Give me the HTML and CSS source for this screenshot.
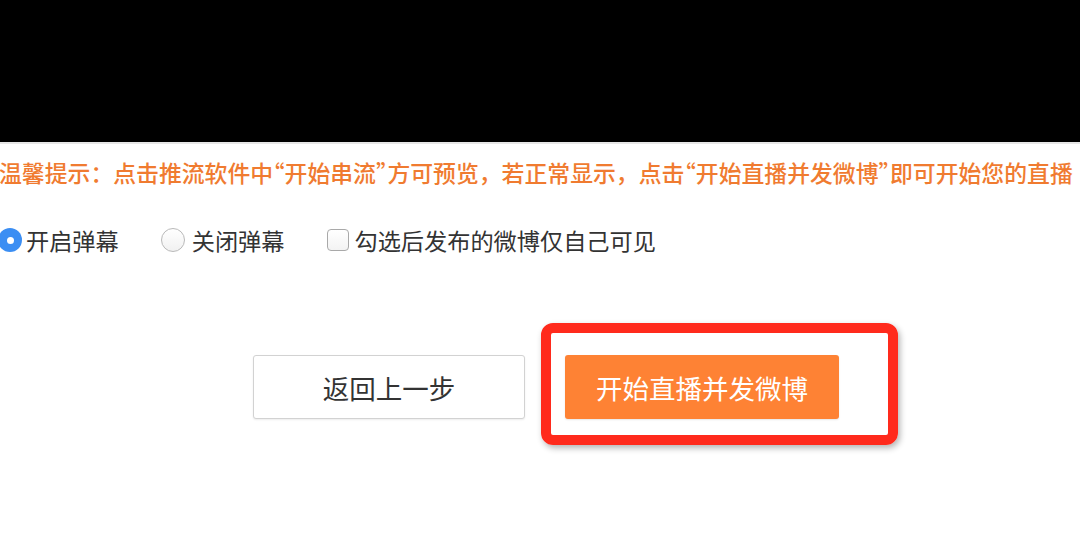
FILE: index.html
```html
<!DOCTYPE html>
<html lang="zh-CN">
<head>
<meta charset="utf-8">
<link rel="stylesheet" href="styles.css">
</head>
<body>
<div class="preview"></div>
<p class="tip">温馨提示：点击推流软件中<span class="q">“</span>开始串流<span class="q">”</span>方可预览，若正常显示，点击<span class="q">“</span>开始直播并发微博<span class="q">”</span>即可开始您的直播</p>
<div class="options">
  <label class="opt"><span class="radio checked"></span><span>开启弹幕</span></label>
  <label class="opt"><span class="radio"></span><span>关闭弹幕</span></label>
  <label class="opt"><span class="check"></span><span>勾选后发布的微博仅自己可见</span></label>
</div>
<div class="actions">
  <button class="btn back">返回上一步</button>
  <div class="primary-wrap">
    <button class="btn primary">开始直播并发微博</button>
    <span class="mark"></span>
  </div>
</div>
</body>
</html>
```
FILE: styles.css
```css
* { box-sizing: border-box; }
html, body {
  margin: 0;
  padding: 0;
  background: #fff;
  width: 1080px;
  height: 555px;
  overflow: hidden;
  font-family: "Noto Sans CJK SC", "Noto Sans", sans-serif;
}
.preview {
  height: 144px;
  background: #000;
  border-bottom: 2px solid #e6e6e6;
}
.tip {
  margin: 13px 0 0 -1px;
  font-size: 22.85px;
  line-height: 30px;
  color: #f07b30;
  font-weight: 500;
  white-space: nowrap;
}
.q {
  font-feature-settings: "halt" 1;
}
.options {
  display: flex;
  align-items: center;
  gap: 42px;
  margin: 38px 0 0 -2px;
  height: 30px;
  font-size: 23.2px;
  color: #333;
}
.opt {
  display: flex;
  align-items: center;
  gap: 7px;
}
.radio {
  width: 24px;
  height: 24px;
  border-radius: 50%;
  border: 1px solid #b9b9b9;
  background: linear-gradient(#fff, #f1f1f1);
  display: flex;
  align-items: center;
  justify-content: center;
}
.radio.checked {
  border: none;
  background: #3b8ef3;
  margin-right: -3px;
}
.radio.checked::after {
  content: "";
  width: 7px;
  height: 7px;
  border-radius: 50%;
  background: #fff;
}
.check {
  width: 22px;
  height: 22px;
  border: 1px solid #a9a9a9;
  border-radius: 4px;
  background: linear-gradient(#fff, #f3f3f3);
  margin-right: -1px;
}
.actions {
  display: flex;
  gap: 40px;
  margin-top: 100px;
  padding-left: 253px;
  align-items: flex-start;
}
.btn {
  font-family: inherit;
  font-size: 26.5px;
  border-radius: 3px;
  cursor: pointer;
}
.back {
  width: 272px;
  height: 64px;
  background: #fff;
  color: #333;
  border: 1px solid #d2d2d2;
  box-shadow: 0 1px 2px rgba(0,0,0,0.08);
}
.primary-wrap {
  position: relative;
}
.primary {
  width: 274px;
  height: 64px;
  background: #fe8234;
  color: #fff;
  border: none;
  box-shadow: 0 1px 2px rgba(0,0,0,0.1);
}
.mark {
  position: absolute;
  left: -24px;
  top: -32px;
  width: 357px;
  height: 122px;
  border: 10px solid #ff2a1c;
  border-radius: 12px;
  box-shadow: 2px 3px 6px rgba(0,0,0,0.3);
  pointer-events: none;
}
```
